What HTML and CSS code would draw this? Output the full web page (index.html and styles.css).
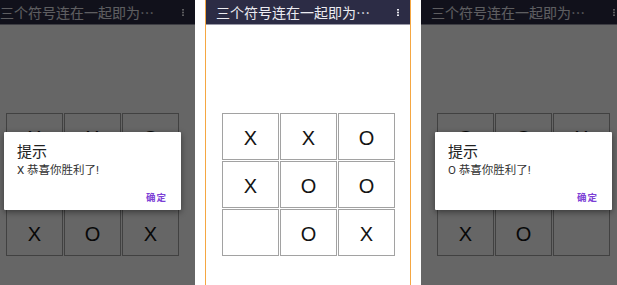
FILE: index.html
```html
<!DOCTYPE html>
<html lang="zh">
<head>
<meta charset="utf-8">
<title>三个符号连在一起即为胜利</title>
<link rel="stylesheet" href="styles.css">
</head>
<body>
<div class="strip">
  <div class="phone first">
    <div class="toolbar">
      <span class="title">三个符号连在一起即为…</span>
      <svg class="more" width="2" height="7" viewBox="0 0 2 7"><rect x="0" y="0" width="2" height="1.6"/><rect x="0" y="2.7" width="2" height="1.6"/><rect x="0" y="5.4" width="2" height="1.6"/></svg>
    </div>
    <div class="content">
      <div class="board">
        <div class="cell">X</div><div class="cell">X</div><div class="cell">O</div>
        <div class="cell">X</div><div class="cell">O</div><div class="cell">O</div>
        <div class="cell">X</div><div class="cell">O</div><div class="cell">X</div>
      </div>
    </div>
    <div class="scrim"></div>
    <div class="dialog">
      <div class="d-title">提示</div>
      <div class="d-msg">X 恭喜你胜利了!</div>
      <div class="d-btn">确定</div>
    </div>
  </div>
  <div class="spacer"></div>
  <div class="phone middle">
    <div class="toolbar">
      <span class="title">三个符号连在一起即为…</span>
      <svg class="more" width="2" height="7" viewBox="0 0 2 7"><rect x="0" y="0" width="2" height="1.6"/><rect x="0" y="2.7" width="2" height="1.6"/><rect x="0" y="5.4" width="2" height="1.6"/></svg>
    </div>
    <div class="content">
      <div class="board">
        <div class="cell">X</div><div class="cell">X</div><div class="cell">O</div>
        <div class="cell">X</div><div class="cell">O</div><div class="cell">O</div>
        <div class="cell"></div><div class="cell">O</div><div class="cell">X</div>
      </div>
    </div>
  </div>
  <div class="spacer"></div>
  <div class="phone last">
    <div class="toolbar">
      <span class="title">三个符号连在一起即为…</span>
      <svg class="more" width="2" height="7" viewBox="0 0 2 7"><rect x="0" y="0" width="2" height="1.6"/><rect x="0" y="2.7" width="2" height="1.6"/><rect x="0" y="5.4" width="2" height="1.6"/></svg>
    </div>
    <div class="content">
      <div class="board">
        <div class="cell">O</div><div class="cell">O</div><div class="cell">X</div>
        <div class="cell">X</div><div class="cell">X</div><div class="cell">O</div>
        <div class="cell">X</div><div class="cell">O</div><div class="cell"></div>
      </div>
    </div>
    <div class="scrim"></div>
    <div class="dialog">
      <div class="d-title">提示</div>
      <div class="d-msg">O 恭喜你胜利了!</div>
      <div class="d-btn">确定</div>
    </div>
  </div>
</div>
</body>
</html>
```

FILE: styles.css
```css
html, body {
  margin: 0;
  padding: 0;
  background: #ffffff;
}
body {
  width: 617px;
  height: 285px;
  overflow: hidden;
  font-family: Roboto, "Noto Sans CJK SC", sans-serif;
}
.strip {
  display: flex;
  flex-direction: row;
  width: 617px;
  height: 285px;
  overflow: hidden;
}
.phone {
  position: relative;
  flex: 0 0 auto;
  width: 205px;
  height: 285px;
  overflow: hidden;
  background: #ffffff;
  display: flex;
  flex-direction: column;
}
.phone.first {
  margin-left: -10px;
}
.phone.middle {
  width: 204px;
  border-left: 1px solid #f5a742;
  border-right: 1px solid #f5a742;
}
.spacer {
  flex: 0 0 10px;
  background: #ffffff;
}
.toolbar {
  height: 24px;
  background: #2c2c45;
  border-bottom: 1px solid #9a9aa8;
  display: flex;
  align-items: center;
  justify-content: space-between;
  padding: 0 11px 0 10px;
  flex: 0 0 auto;
}
.title {
  color: #ececf2;
  font-family: "Noto Sans CJK SC", sans-serif;
  font-size: 14px;
  line-height: 24px;
  white-space: nowrap;
}
.more {
  fill: #e6e6ee;
  display: block;
}
.content {
  flex: 1 1 auto;
  padding-top: 88px;
  padding-left: 16px;
}
.board {
  display: grid;
  grid-template-columns: repeat(3, 57px);
  grid-template-rows: repeat(3, 47px);
  gap: 1px;
}
.cell {
  box-sizing: border-box;
  border: 1px solid #a2a2a2;
  background: #ffffff;
  display: flex;
  align-items: center;
  justify-content: center;
  font-family: "Liberation Sans", Arial, sans-serif;
  font-size: 20px;
  line-height: 22px;
  color: #141414;
  padding-top: 2px;
}
.scrim {
  position: absolute;
  inset: 0;
  background: rgba(0, 0, 0, 0.6);
}
.dialog {
  position: absolute;
  top: 132px;
  left: 14px;
  right: 14px;
  height: 78px;
  box-sizing: border-box;
  background: #ffffff;
  border-radius: 1px;
  box-shadow: 0 2px 6px rgba(0, 0, 0, 0.45);
  padding: 10px 15px 7px 13px;
  display: flex;
  flex-direction: column;
}
.d-title {
  font-family: "Noto Sans CJK SC", sans-serif;
  font-size: 15px;
  line-height: 18px;
  color: #212121;
}
.d-msg {
  margin-top: 3px;
  font-size: 11.5px;
  line-height: 14px;
  color: #333333;
}
.d-btn {
  margin-top: auto;
  align-self: flex-end;
  font-family: "Noto Sans CJK SC", sans-serif;
  font-size: 9.5px;
  line-height: 12px;
  font-weight: 700;
  letter-spacing: 1px;
  margin-right: -1px;
  color: #7d3fd6;
}
```
